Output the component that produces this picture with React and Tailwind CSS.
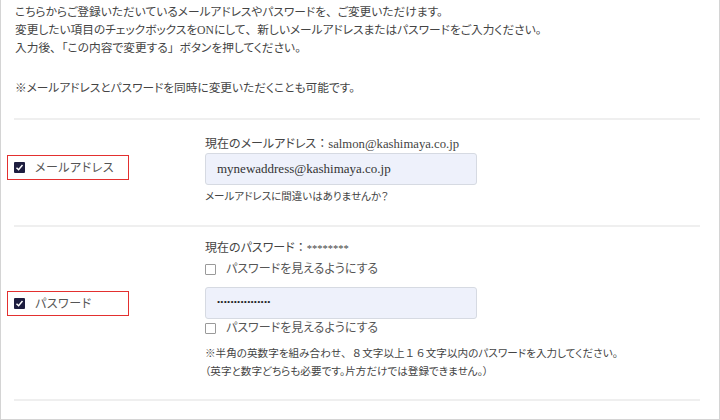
// full-width punctuation and digits keep their full em width, kana stay proportional
const WIDE = '、：「」８１６';

const J = ({ children }) =>
  Array.from(children).map((ch, i) =>
    WIDE.includes(ch) ? (
      <span key={i} className="[font-feature-settings:normal]">
        {ch}
      </span>
    ) : (
      ch
    )
  );

const Check = ({ checked }) =>
  checked ? (
    <span className="flex h-[11px] w-[11px] shrink-0 items-center justify-center rounded-[1px] bg-[#1d1d3f]">
      <svg viewBox="0 0 12 12" className="h-[9px] w-[9px]">
        <path d="M2 6.3 L4.8 9 L10 2.8" fill="none" stroke="#fff" strokeWidth="2" />
      </svg>
    </span>
  ) : (
    <span className="h-[11px] w-[11px] shrink-0 rounded-[1px] border border-[#9a9a9a] bg-white" />
  );

const Divider = () => <div className="ml-[13px] mr-[19px] h-[2px] bg-[#efefef]" />;

const LabelBox = ({ text }) => (
  <div className="flex h-[25px] w-[122px] items-center gap-[10px] border border-[#e3302f] pl-[6px] text-[12px] tracking-[0.5px] text-[#555]">
    <Check checked />
    <span>{text}</span>
  </div>
);

const ShowPassword = () => (
  <div className="flex items-center gap-[10px] text-[12px] leading-[18px] text-[#555]">
    <Check checked={false} />
    <span>パスワードを見えるようにする</span>
  </div>
);

export default function App() {
  return (
    <div className="h-[420px] w-[720px] overflow-hidden border-x border-b border-[#d4d4d4] bg-white font-['Liberation_Serif','Noto_Sans_CJK_JP',serif] text-[#444] [font-feature-settings:'palt']">
      <div className="pl-[14px] pt-[4px] text-[11.7px] leading-[18px]">
        <p><J>こちらからご登録いただいているメールアドレスやパスワードを、ご変更いただけます。</J></p>
        <p><J>変更したい項目のチェックボックスをONにして、新しいメールアドレスまたはパスワードをご入力ください。</J></p>
        <p><J>入力後、「この内容で変更する」ボタンを押してください。</J></p>
        <p className="mt-[22px]">※メールアドレスとパスワードを同時に変更いただくことも可能です。</p>
      </div>

      <div className="mt-[20px]">
        <Divider />
      </div>

      <div className="flex">
        <div className="w-[204px] pl-[6px] pt-[35px]">
          <LabelBox text="メールアドレス" />
        </div>
        <div className="pb-[20px] pt-[15px]">
          <p className="text-[12px] leading-[18px]">
            <J>現在のメールアドレス：</J>
            <span className="text-[12.7px]">salmon@kashimaya.co.jp</span>
          </p>
          <div className="flex h-[32px] w-[272px] items-center rounded-[3px] border border-[#d6dae2] bg-[#eef1fb] pl-[11px] text-[13px] text-[#333]">
            mynewaddress@kashimaya.co.jp
          </div>
          <p className="mt-[4px] text-[10.5px] leading-[16px]">メールアドレスに間違いはありませんか？</p>
        </div>
      </div>

      <Divider />

      <div className="flex">
        <div className="w-[204px] pl-[6px] pt-[64px]">
          <LabelBox text="パスワード" />
        </div>
        <div className="pb-[18px] pt-[12px]">
          <p className="text-[12px] leading-[18px]">
            <J>現在のパスワード：</J>
            <span className="text-[10.5px]">********</span>
          </p>
          <div className="mt-[2px]">
            <ShowPassword />
          </div>
          <div className="mt-[9px] flex h-[32px] w-[272px] items-center rounded-[3px] border border-[#d6dae2] bg-[#eef1fb] pl-[11px] text-[9px] tracking-[0.2px] text-[#222]">
            ••••••••••••••••
          </div>
          <ShowPassword />
          <div className="mt-[8px] text-[10.6px] leading-[18px]">
            <p><J>※半角の英数字を組み合わせ、８文字以上１６文字以内のパスワードを入力してください。</J></p>
            <p>（英字と数字どちらも必要です。片方だけでは登録できません。）</p>
          </div>
        </div>
      </div>

      <Divider />
    </div>
  );
}
